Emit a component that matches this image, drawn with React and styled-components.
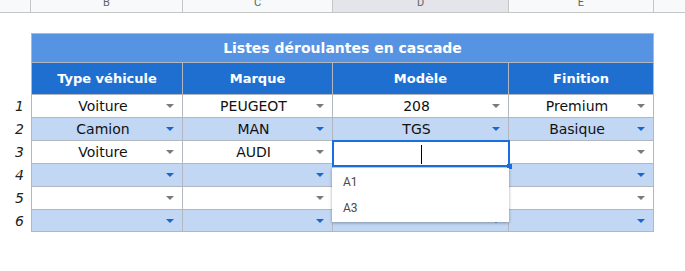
import React from 'react'
import styled, { createGlobalStyle } from 'styled-components'

const GlobalStyle = createGlobalStyle`
  html, body {
    margin: 0;
    padding: 0;
    background: #ffffff;
  }
  body {
    font-family: "DejaVu Sans", "Liberation Sans", sans-serif;
  }
`

const COLS = '31px 152px 150px 176px 145px 1fr'

const Sheet = styled.div`
  width: 685px;
  height: 271px;
  overflow: hidden;
  position: relative;
  background: #ffffff;
`

const ColBar = styled.div`
  display: grid;
  grid-template-columns: ${COLS};
  height: 13px;
  border-bottom: 1px solid #c4c7c5;
  box-sizing: border-box;
  background: #f8f9fa;
`

const ColHead = styled.div`
  border-right: 1px solid #c4c7c5;
  background: ${p => (p.$active ? '#e3e5ea' : '#f8f9fa')};
  color: #5f6368;
  font-family: Roboto, "Liberation Sans", sans-serif;
  font-size: 11px;
  line-height: 11px;
  text-align: center;
  overflow: hidden;
  &:last-child {
    border-right: none;
  }
`

const ColLetter = styled.span`
  display: block;
  margin-top: -3px;
`

const Body = styled.div`
  padding-top: 20px;
`

const Grid = styled.div`
  display: grid;
  grid-template-columns: ${COLS};
`

const Gutter = styled.div`
  height: ${p => p.$h}px;
  font-family: "DejaVu Sans", sans-serif;
  font-style: italic;
  font-size: 14px;
  color: #222;
  display: flex;
  align-items: center;
  justify-content: flex-end;
  padding-right: 7px;
  box-sizing: border-box;
`

const TitleCell = styled.div`
  grid-column: 2 / 6;
  height: 29px;
  background: #5694e3;
  border: 1px solid #b3b8c0;
  border-bottom: none;
  box-sizing: border-box;
  color: #ffffff;
  font-weight: bold;
  font-size: 14px;
  display: flex;
  align-items: center;
  justify-content: center;
`

const HeadCell = styled.div`
  height: 32px;
  background: #1f6fd0;
  border-top: 1px solid #b3b8c0;
  border-right: 1px solid #b3b8c0;
  border-left: ${p => (p.$first ? '1px solid #b3b8c0' : 'none')};
  box-sizing: border-box;
  color: #ffffff;
  font-weight: bold;
  font-size: 13px;
  display: flex;
  align-items: center;
  justify-content: center;
`

const Cell = styled.div`
  position: relative;
  height: 23px;
  background: ${p => (p.$alt ? '#c2d7f4' : '#ffffff')};
  border-top: 1px solid #b3b8c0;
  border-right: 1px solid #b3b8c0;
  border-left: ${p => (p.$first ? '1px solid #b3b8c0' : 'none')};
  border-bottom: ${p => (p.$last ? '1px solid #b3b8c0' : 'none')};
  box-sizing: border-box;
  color: #111;
  font-size: 14px;
  display: flex;
  align-items: center;
  justify-content: center;
  padding-right: 8px;
`

const Arrow = styled.span`
  position: absolute;
  right: 8px;
  top: 50%;
  margin-top: -2px;
  width: 0;
  height: 0;
  border-left: 4px solid transparent;
  border-right: 4px solid transparent;
  border-top: 4px solid ${p => (p.$alt ? '#1a66cf' : '#7a7a7a')};
`

const Editor = styled.div`
  position: absolute;
  left: -1px;
  top: -1px;
  right: -2px;
  bottom: -4px;
  border: 2px solid #1a6fde;
  background: #ffffff;
  z-index: 2;
  &::after {
    content: '';
    position: absolute;
    right: -4px;
    bottom: -4px;
    width: 5px;
    height: 5px;
    background: #1a6fde;
  }
`

const Caret = styled.span`
  position: absolute;
  left: 87px;
  top: 3px;
  width: 1px;
  height: 19px;
  background: #000;
`

const Popup = styled.div`
  position: absolute;
  left: -1px;
  top: 27px;
  width: 177px;
  height: 54px;
  background: #ffffff;
  box-shadow: 0 1px 3px rgba(0, 0, 0, 0.35);
  z-index: 3;
  display: flex;
  flex-direction: column;
  justify-content: center;
`

const Option = styled.div`
  font-family: Roboto, "Liberation Sans", sans-serif;
  font-size: 12px;
  color: #4a4a4a;
  height: 26px;
  line-height: 26px;
  padding-left: 11px;
`

const rows = [
  ['Voiture', 'PEUGEOT', '208', 'Premium'],
  ['Camion', 'MAN', 'TGS', 'Basique'],
  ['Voiture', 'AUDI', null, ''],
  ['', '', '', ''],
  ['', '', '', ''],
  ['', '', '', ''],
]

const headers = ['Type véhicule', 'Marque', 'Modèle', 'Finition']

export default function App() {
  return (
    <Sheet>
      <GlobalStyle />
      <ColBar>
        <ColHead />
        <ColHead><ColLetter>B</ColLetter></ColHead>
        <ColHead><ColLetter>C</ColLetter></ColHead>
        <ColHead $active><ColLetter>D</ColLetter></ColHead>
        <ColHead><ColLetter>E</ColLetter></ColHead>
        <ColHead />
      </ColBar>
      <Body>
        <Grid>
          <Gutter $h={29} />
          <TitleCell>Listes déroulantes en cascade</TitleCell>
          <div />

          <Gutter $h={32} />
          {headers.map((h, i) => (
            <HeadCell key={h} $first={i === 0}>{h}</HeadCell>
          ))}
          <div />

          {rows.map((r, ri) => {
            const alt = ri % 2 === 1
            return (
              <React.Fragment key={ri}>
                <Gutter $h={23}>{ri + 1}</Gutter>
                {r.map((v, ci) => (
                  <Cell key={ci} $alt={alt} $first={ci === 0} $last={ri === rows.length - 1}>
                    {v}
                    {v === null ? (
                      <>
                        <Editor><Caret /></Editor>
                        <Popup>
                          <Option>A1</Option>
                          <Option>A3</Option>
                        </Popup>
                      </>
                    ) : (
                      <Arrow $alt={alt} />
                    )}
                  </Cell>
                ))}
                <div />
              </React.Fragment>
            )
          })}
        </Grid>
      </Body>
    </Sheet>
  )
}
